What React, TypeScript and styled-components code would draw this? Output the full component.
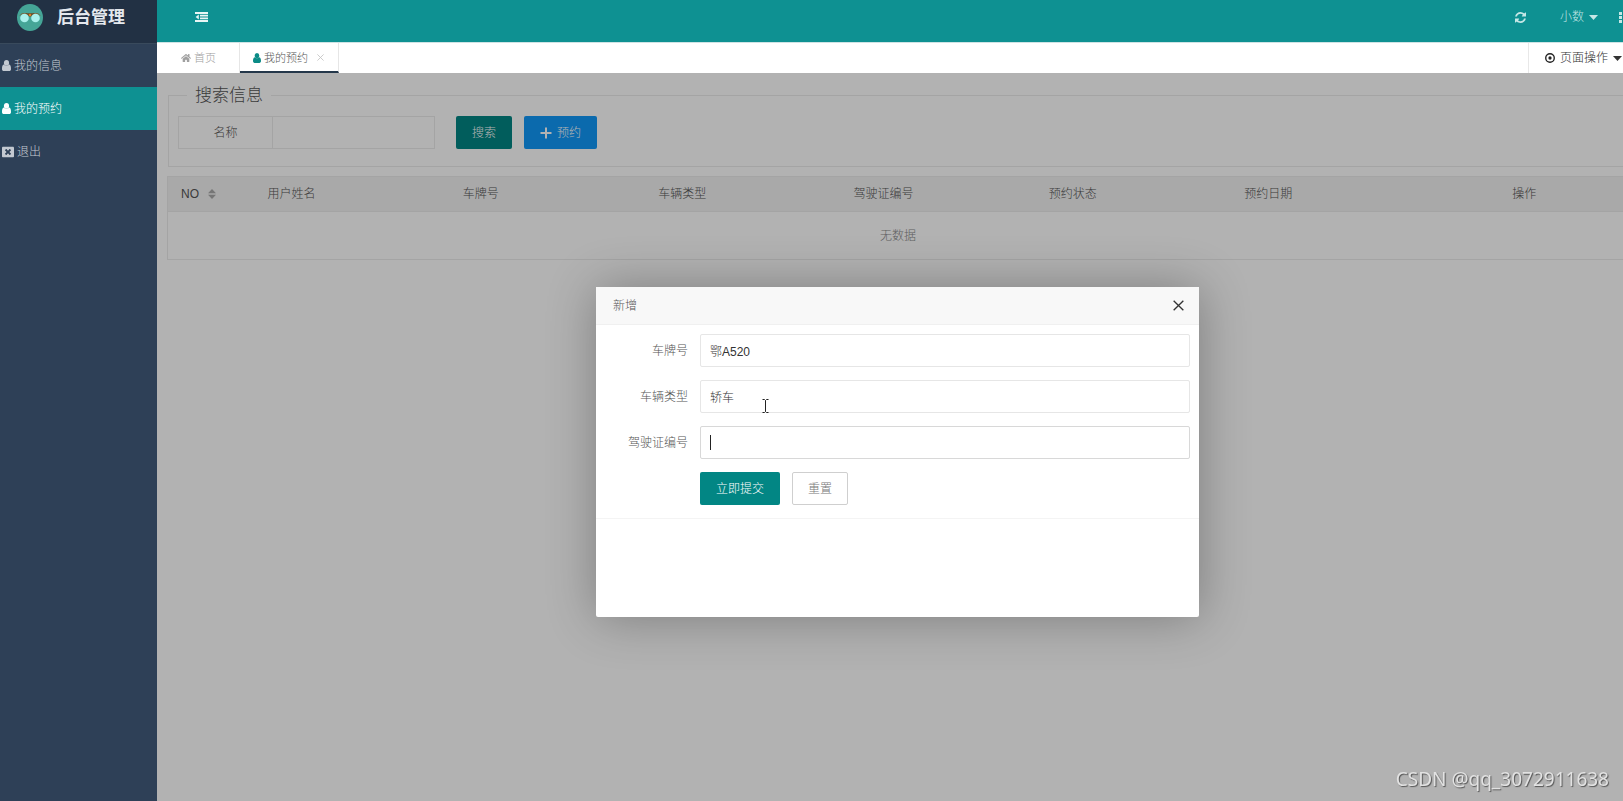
import React from "react";
import styled, { createGlobalStyle } from "styled-components";
import { FaHome, FaWindowClose } from "react-icons/fa";

const GlobalStyle = createGlobalStyle`
  *, *::before, *::after { box-sizing: border-box; }
  body {
    margin: 0;
    font: 300 12px/18px "Liberation Sans", "Noto Sans CJK SC", sans-serif;
    color: #555;
    background: #fff;
  }
  button, input { font: inherit; }
  a { color: inherit; text-decoration: none; }
  svg { display: block; flex: none; }
`;

const Page = styled.div`
  display: flex;
  min-height: 100vh;
  overflow: hidden;
`;

const Sidebar = styled.aside`
  flex: none;
  width: 157px;
  background: #2e4057;
`;

const Brand = styled.div`
  display: flex;
  align-items: center;
  gap: 14px;
  height: 44px;
  padding: 0 0 8px 17px;
  background: #223144;
  border-bottom: 1px solid #394a5c;
  color: #e4e8ed;
  font-size: 17px;
  font-weight: 700;
`;

const MenuLink = styled.a<{ $active?: boolean }>`
  display: flex;
  align-items: center;
  gap: 3px;
  height: 43px;
  padding-left: 2px;
  background: ${(p) => (p.$active ? "#0e9192" : "transparent")};
  color: ${(p) => (p.$active ? "#fff" : "#c3c9d1")};
`;

const Main = styled.div`
  display: flex;
  flex: 1;
  flex-direction: column;
  min-width: 0;
`;

const TopBar = styled.header`
  display: flex;
  align-items: center;
  justify-content: space-between;
  height: 42px;
  padding: 0 1px 8px 38px;
  background: #0e9192;
`;

const TopActions = styled.div`
  display: flex;
  align-items: center;
`;

const BarButton = styled.button<{ $gap?: number }>`
  display: flex;
  align-items: center;
  gap: 5px;
  margin-right: ${(p) => p.$gap ?? 0}px;
  padding: 0;
  border: 0;
  background: none;
  color: #c5e7e6;
`;

const TabBar = styled.nav`
  display: flex;
  height: 31px;
  background: #fff;
  border-top: 1px solid #cfe3e4;
`;

const Tab = styled.div<{ $active?: boolean }>`
  display: flex;
  align-items: center;
  gap: 3px;
  width: ${(p) => (p.$active ? 99 : 83)}px;
  padding: ${(p) => (p.$active ? "1px 0 0 13px" : "0 0 1px 24px")};
  border-right: 1px solid #e6e6e6;
  border-bottom: ${(p) => (p.$active ? "2px solid #24374a" : "0")};
  font-size: 11px;
  color: ${(p) => (p.$active ? "#555" : "#a0a0a0")};
`;

const TabIcon = styled.span`
  color: #0b8b86;
`;

const TabClose = styled.button`
  display: flex;
  margin-left: 6px;
  padding: 0;
  border: 0;
  background: none;
  color: #c2c2c2;
`;

const PageMenu = styled.button`
  display: flex;
  align-items: center;
  gap: 5px;
  margin-left: auto;
  padding: 0 1px 0 16px;
  border: 0;
  border-left: 1px solid #e8e8e8;
  background: none;
  color: #333;
`;

const Workspace = styled.main`
  position: relative;
  flex: 1;
  padding: 12px 0 0 10px;
  overflow: hidden;
`;

const SearchPanel = styled.fieldset`
  min-width: 0;
  margin: 0 -6px 9px 1px;
  padding: 11px 9px 17px;
  border: 1px solid #ebebeb;
`;

const SearchTitle = styled.legend`
  margin-left: 9px;
  padding: 2px 8px 0;
  font-size: 17px;
  line-height: 18px;
  color: #555;
`;

const SearchRow = styled.div`
  display: flex;
  align-items: center;
`;

const SearchField = styled.div`
  display: flex;
  width: 257px;
  height: 33px;
  margin-right: 21px;
  border: 1px solid #ebebeb;
`;

const SearchLabel = styled.label`
  width: 94px;
  border-right: 1px solid #ebebeb;
  line-height: 32px;
  text-align: center;
`;

const SearchInput = styled.input`
  flex: 1;
  min-width: 0;
  padding: 0 9px;
  border: 0;
  outline: 0;
  background: none;
`;

const Button = styled.button<{ $tone?: "blue" | "plain" }>`
  display: flex;
  align-items: center;
  gap: 5px;
  height: 33px;
  margin-right: 12px;
  padding: 0 ${(p) => (p.$tone === "plain" ? 15 : 16)}px;
  border: ${(p) => (p.$tone === "plain" ? "1px solid #cfcfcf" : "0")};
  border-radius: 2px;
  background: ${(p) =>
    p.$tone === "blue" ? "#1098f8" : p.$tone === "plain" ? "#fff" : "#028684"};
  color: ${(p) => (p.$tone === "plain" ? "#777" : "#fff")};
`;

const DataTable = styled.table`
  width: calc(100% + 6px);
  table-layout: fixed;
  border-collapse: collapse;
  border: 1px solid #ebebeb;
`;

const HeadCell = styled.th<{ $width?: number; $action?: boolean }>`
  width: ${(p) => (p.$width ? `${p.$width}px` : "auto")};
  height: 35px;
  padding: ${(p) => (p.$action ? "0 6px 0 0" : "0 0 0 13px")};
  border-bottom: 1px solid #ebebeb;
  background: #f2f2f2;
  font-weight: 300;
  text-align: ${(p) => (p.$action ? "center" : "left")};
`;

const Sortable = styled.span`
  display: flex;
  align-items: center;
  gap: 9px;
`;

const EmptyCell = styled.td`
  height: 48px;
  padding: 0;
  text-align: center;
  color: #888;
`;

const Overlay = styled.div`
  position: absolute;
  inset: 0;
  display: flex;
  align-items: center;
  justify-content: center;
  padding: 30px 0 0 15px;
  background: rgba(0, 0, 0, 0.3);
`;

const Dialog = styled.section`
  width: 603px;
  min-height: 330px;
  background: #fff;
  border-radius: 2px;
  box-shadow: 1px 1px 50px rgba(0, 0, 0, 0.3);
`;

const DialogHeader = styled.header`
  display: flex;
  align-items: center;
  justify-content: space-between;
  height: 38px;
  padding: 0 15px 0 17px;
  border-bottom: 1px solid #f0f0f0;
  background: #f8f8f8;
  color: #555;
`;

const DialogClose = styled.button`
  display: flex;
  padding: 0;
  border: 0;
  background: none;
  color: #333;
`;

const DialogForm = styled.form`
  display: flex;
  flex-direction: column;
  gap: 13px;
  padding: 9px 9px 13px 0;
  border-bottom: 1px solid #f4f4f4;
`;

const FormRow = styled.div`
  display: flex;
  align-items: center;
`;

const FormLabel = styled.label`
  width: 104px;
  padding-right: 12px;
  text-align: right;
`;

const FormControl = styled.div`
  position: relative;
  display: flex;
  flex: 1;
`;

const TextInput = styled.input<{ $focused?: boolean }>`
  width: 100%;
  height: 33px;
  padding: 0 9px;
  border: 1px solid ${(p) => (p.$focused ? "#d8d8d8" : "#e6e6e6")};
  border-radius: 2px;
  outline: 0;
  color: #333;
  caret-color: transparent;
`;

const Caret = styled.span`
  position: absolute;
  top: 9px;
  left: 10px;
  width: 1px;
  height: 15px;
  background: #222;
`;

const FormActions = styled.div`
  display: flex;
  padding-left: 104px;
`;

const Pointer = styled.svg`
  position: absolute;
  top: 19px;
  left: 62px;
`;

const Watermark = styled.div`
  position: fixed;
  right: 14px;
  bottom: 8px;
  color: #e2e2e2;
  font: 400 19px/28px "Noto Sans", sans-serif;
  text-shadow: 1px 1px 1px #555;
`;

const DownArrow = () => (
  <svg width="9" height="5" viewBox="0 0 9 5" fill="currentColor" aria-hidden="true">
    <path d="M0 0h9L4.5 5z" />
  </svg>
);

const Cross = ({ size, weight }: { size: number; weight: number }) => (
  <svg width={size} height={size} viewBox="0 0 10 10" fill="none" stroke="currentColor" strokeWidth={weight} aria-hidden="true">
    <path d="M.6.6l8.8 8.8M9.4.6L.6 9.4" />
  </svg>
);

const PersonIcon = ({ size = 9 }: { size?: number }) => (
  <svg width={size} height={size + 2} viewBox="0 0 9 11" fill="currentColor" aria-hidden="true">
    <ellipse cx="4.5" cy="2.9" rx="2.6" ry="2.9" />
    <path d="M1.8 4.6C.4 5 0 6.900 0 8.900 0 10.200.7 11 1.800 11h5.400C8.300 11 9 10.200 9 8.900 9 6.900 8.600 5 7.200 4.600 5.800 6.300 3.200 6.300 1.800 4.600z" />
  </svg>
);

const CollapseIcon = () => (
  <svg width="13" height="10" viewBox="0 0 13 10" fill="#e8f6f5" aria-hidden="true">
    <path d="M0 0h13v2H0zM5 2.800h8v1.700H5zM5 5.500h8v1.700H5zM0 8h13v2H0zM3.800 2.600v4.800L.6 5z" />
  </svg>
);

const RefreshIcon = () => (
  <svg width="11" height="11" viewBox="0 0 1536 1536" fill="currentColor" aria-hidden="true">
    <path d="M1511 928q0 5-1 7-64 268-268 434.500t-478 166.500q-146 0-282.500-55t-243.500-157l-129 129q-19 19-45 19t-45-19-19-45v-448q0-26 19-45t45-19h448q26 0 45 19t19 45-19 45l-137 137q71 66 161 102t187 36q134 0 250-65t186-179q11-17 53-117 8-23 30-23h192q13 0 22.500 9.500t9.500 22.500zm25-800v448q0 26-19 45t-45 19h-448q-26 0-45-19t-19-45 19-45l138-138q-148-137-349-137-134 0-250 65t-186 179q-11 17-53 117-8 23-30 23h-199q-13 0-22.500-9.500t-9.500-22.500v-7q65-268 270-434.500t480-166.500q146 0 284 55.500t245 156.500l130-129q19-19 45-19t45 19 19 45z" />
  </svg>
);

const Logo = () => (
  <svg width="26" height="27" viewBox="0 0 26 27" aria-hidden="true">
    <ellipse cx="13" cy="13.500" rx="13" ry="13.500" fill="#45a597" />
    <path d="M3 11.500c1-2 4-2.500 7-1.700M23 11.500c-1-2-4-2.500-7-1.700" fill="none" stroke="#7a6038" strokeWidth="1" />
    <path d="M9 9.300h8v1.500h-1.500L14 12.500h-2l-1.500-1.700H9z" fill="#6b4a25" />
    <circle cx="13" cy="11" r="1.300" fill="#d9812c" />
    <circle cx="7.500" cy="14" r="4.300" fill="#a9f0ec" />
    <circle cx="18.500" cy="14" r="4.300" fill="#a9f0ec" />
  </svg>
);

const columns = ["用户姓名", "车牌号", "车辆类型", "驾驶证编号", "预约状态", "预约日期"];

export default function App() {
  return (
    <Page>
      <GlobalStyle />
      <Sidebar>
        <Brand>
          <Logo />
          后台管理
        </Brand>
        <nav>
          <MenuLink href="#info">
            <PersonIcon />
            我的信息
          </MenuLink>
          <MenuLink href="#booking" $active>
            <PersonIcon />
            我的预约
          </MenuLink>
          <MenuLink href="#logout">
            <FaWindowClose size={12} />
            退出
          </MenuLink>
        </nav>
      </Sidebar>

      <Main>
        <TopBar>
          <BarButton aria-label="收起菜单">
            <CollapseIcon />
          </BarButton>
          <TopActions>
            <BarButton aria-label="刷新" $gap={34}>
              <RefreshIcon />
            </BarButton>
            <BarButton $gap={21}>
              小数
              <DownArrow />
            </BarButton>
            <BarButton aria-label="更多">
              <svg width="3" height="11" viewBox="0 0 3 11" fill="currentColor" aria-hidden="true">
                <path d="M0 0h3v3H0zM0 4h3v3H0zM0 8h3v3H0z" />
              </svg>
            </BarButton>
          </TopActions>
        </TopBar>

        <TabBar>
          <Tab>
            <FaHome size={10} />
            <a href="#home">首页</a>
          </Tab>
          <Tab $active>
            <TabIcon>
              <PersonIcon size={8} />
            </TabIcon>
            <a href="#booking">我的预约</a>
            <TabClose aria-label="关闭标签">
              <Cross size={7} weight={1.2} />
            </TabClose>
          </Tab>
          <PageMenu>
            <svg width="10" height="10" viewBox="0 0 11 11" aria-hidden="true">
              <circle cx="5.500" cy="5.500" r="4.700" fill="none" stroke="#222" strokeWidth="1.500" />
              <circle cx="5.500" cy="5.500" r="1.800" fill="#222" />
            </svg>
            页面操作
            <DownArrow />
          </PageMenu>
        </TabBar>

        <Workspace>
          <SearchPanel>
            <SearchTitle>搜索信息</SearchTitle>
            <SearchRow>
              <SearchField>
                <SearchLabel htmlFor="search-name">名称</SearchLabel>
                <SearchInput id="search-name" />
              </SearchField>
              <Button>搜索</Button>
              <Button $tone="blue">
                <svg width="12" height="12" viewBox="0 0 12 12" fill="currentColor" aria-hidden="true">
                  <path d="M5 .5h2V5h4.500v2H7v4.500H5V7H.5V5H5z" />
                </svg>
                预约
              </Button>
            </SearchRow>
          </SearchPanel>

          <DataTable>
            <thead>
              <tr>
                <HeadCell $width={87}>
                  <Sortable>
                    NO
                    <svg width="8" height="10" viewBox="0 0 8 10" fill="#aaa" aria-hidden="true">
                      <path d="M0 4.300L4 0l4 4.300zM0 5.700h8L4 10z" />
                    </svg>
                  </Sortable>
                </HeadCell>
                {columns.map((name) => (
                  <HeadCell key={name}>{name}</HeadCell>
                ))}
                <HeadCell $width={202} $action>
                  操作
                </HeadCell>
              </tr>
            </thead>
            <tbody>
              <tr>
                <EmptyCell colSpan={8}>无数据</EmptyCell>
              </tr>
            </tbody>
          </DataTable>

          <Overlay>
            <Dialog role="dialog" aria-labelledby="dialog-title">
              <DialogHeader>
                <span id="dialog-title">新增</span>
                <DialogClose aria-label="关闭">
                  <Cross size={11} weight={1.2} />
                </DialogClose>
              </DialogHeader>
              <DialogForm onSubmit={(e) => e.preventDefault()}>
                <FormRow>
                  <FormLabel htmlFor="plate">车牌号</FormLabel>
                  <FormControl>
                    <TextInput id="plate" defaultValue="鄂A520" />
                  </FormControl>
                </FormRow>
                <FormRow>
                  <FormLabel htmlFor="kind">车辆类型</FormLabel>
                  <FormControl>
                    <TextInput id="kind" defaultValue="轿车" />
                    <Pointer width="7" height="14" viewBox="0 0 7 14" fill="none" stroke="#222" aria-hidden="true">
                      <path d="M.5.5h2l1 1 1-1h2M3.500 1.500v11M.5 13.500h2l1-1 1 1h2" />
                    </Pointer>
                  </FormControl>
                </FormRow>
                <FormRow>
                  <FormLabel htmlFor="license">驾驶证编号</FormLabel>
                  <FormControl>
                    <TextInput id="license" $focused />
                    <Caret />
                  </FormControl>
                </FormRow>
                <FormActions>
                  <Button type="submit">立即提交</Button>
                  <Button type="reset" $tone="plain">
                    重置
                  </Button>
                </FormActions>
              </DialogForm>
            </Dialog>
          </Overlay>
        </Workspace>
      </Main>
      <Watermark>CSDN @qq_3072911638</Watermark>
    </Page>
  );
}
